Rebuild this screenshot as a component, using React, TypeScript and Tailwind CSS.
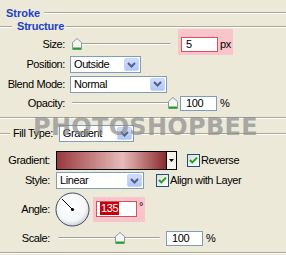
import React from "react";

function Etched({ className = "" }: { className?: string }) {
  return <div className={"h-0 border-t border-t-[#aca899] border-b border-b-white " + className} />;
}

function Chevron() {
  return (
    <svg width="9" height="6" viewBox="0 0 9 6">
      <path d="M1 1 L4.5 4.5 L8 1" fill="none" stroke="#4d6185" strokeWidth="2" />
    </svg>
  );
}

function Select({ className, value }: { className: string; value: string }) {
  return (
    <div className={"flex h-[17px] border border-[#7f9db9] bg-white " + className}>
      <div className="flex flex-1 items-center pl-[3px]">{value}</div>
      <div className="m-[1px] flex w-[15px] items-center justify-center rounded-[2px] border border-[#c6d5fb] bg-linear-to-b from-[#d3ddfc] to-[#b2c5f4]">
        <Chevron />
      </div>
    </div>
  );
}

function Thumb() {
  return (
    <svg width="10" height="12" viewBox="0 0 10 12">
      <path d="M0.5 4.5 L5 0.5 L9.5 4.5 V11.5 H0.5 Z" fill="#f6f6f2" stroke="#8a9aa6" />
      <path d="M1 10.5 H9" stroke="#24a024" strokeWidth="2" />
    </svg>
  );
}

function Slider({ className, thumbLeft }: { className: string; thumbLeft: number }) {
  return (
    <div className={"relative h-[14px] " + className}>
      <div className="absolute left-[2px] right-[1px] top-[6px] h-0 rounded-full border-t border-t-[#a3a296] border-b border-b-white" />
      <div className="absolute top-[1px]" style={{ left: thumbLeft }}>
        <Thumb />
      </div>
    </div>
  );
}

function Check() {
  return (
    <svg width="13" height="13" viewBox="0 0 13 13">
      <defs>
        <linearGradient id="cbg" x1="0" y1="0" x2="1" y2="1">
          <stop offset="0" stopColor="#dcdcd6" />
          <stop offset="1" stopColor="#ffffff" />
        </linearGradient>
      </defs>
      <rect x="0.5" y="0.5" width="12" height="12" fill="url(#cbg)" stroke="#1c5180" />
      <path d="M3 6 L5.3 8.4 L10 3.6" fill="none" stroke="#21a121" strokeWidth="2" />
    </svg>
  );
}

function Dial() {
  return (
    <svg width="35" height="35" viewBox="0 0 35 35">
      <defs>
        <radialGradient id="dg" cx="0.45" cy="0.4" r="0.6">
          <stop offset="0" stopColor="#ffffff" />
          <stop offset="0.75" stopColor="#f4f6f9" />
          <stop offset="1" stopColor="#c9d2de" />
        </radialGradient>
      </defs>
      <circle cx="17.5" cy="17.5" r="16.5" fill="url(#dg)" stroke="#3e4b5b" />
      <line x1="17.5" y1="17.5" x2="7" y2="7" stroke="#000" strokeWidth="1" />
      <circle cx="17.5" cy="17.5" r="1.6" fill="#000" />
    </svg>
  );
}

export default function App() {
  return (
    <div className="relative h-[255px] w-[286px] overflow-hidden bg-[#ece9d8] font-['Liberation_Sans',Arial,sans-serif] text-[11px] leading-none tracking-[-0.4px] text-black">
      {/* Stroke header */}
      <div className="mt-[6px] flex h-[14px] items-center pl-[6px]">
        <span className="font-bold tracking-[0px] text-[#1d42c9]">Stroke</span>
        <Etched className="ml-[4px] flex-1" />
      </div>
      {/* Structure header */}
      <div className="flex h-[13px] items-center">
        <Etched className="w-[12px]" />
        <span className="ml-[5px] font-bold tracking-[-0.2px] text-[#1d42c9]">Structure</span>
        <Etched className="ml-[2px] flex-1" />
      </div>

      {/* Size */}
      <div className="flex h-[22px] items-center">
        <div className="w-[65px] text-right">Size:</div>
        <Slider className="ml-[5px] w-[102px]" thumbLeft={2} />
        <div className="-mt-[4px] ml-[6px] flex items-center self-stretch bg-[#f9c4ca] pl-[3px] pr-[2px] pt-[5px]">
          <div className="flex h-[15px] w-[37px] items-center border border-[#e2505e] bg-white pl-[4px]">5</div>
          <span className="ml-[2px]">px</span>
        </div>
      </div>

      {/* Position */}
      <div className="flex h-[19px] items-center">
        <div className="w-[65px] text-right">Position:</div>
        <Select className="ml-[5px] w-[71px]" value="Outside" />
      </div>

      {/* Blend Mode */}
      <div className="flex h-[20px] items-center">
        <div className="w-[65px] text-right">Blend Mode:</div>
        <Select className="ml-[5px] w-[97px]" value="Normal" />
      </div>

      {/* Opacity */}
      <div className="flex h-[18px] items-center">
        <div className="w-[65px] text-right">Opacity:</div>
        <Slider className="ml-[5px] w-[108px]" thumbLeft={98} />
        <div className="ml-[2px] flex h-[15px] w-[37px] items-center border border-[#7f9db9] bg-white pl-[5px]">100</div>
        <span className="ml-[3px]">%</span>
      </div>

      <Etched className="mt-[5px]" />

      {/* Fill Type */}
      <div className="mt-[6px] flex h-[17px] items-center">
        <Etched className="w-[10px]" />
        <span className="ml-[3px]">Fill Type:</span>
        <Select className="ml-[6px] w-[75px]" value="Gradient" />
        <Etched className="ml-[3px] flex-1" />
      </div>

      {/* Gradient */}
      <div className="mt-[9px] flex h-[19px] items-center">
        <div className="w-[50px] text-right">Gradient:</div>
        <div className="ml-[6px] flex h-[19px] w-[121px] border border-black">
          <div className="flex-1 bg-linear-to-r from-[#983840] via-[#e7bcbc] via-60% to-[#8a2a31]" />
          <div className="flex w-[10px] items-center justify-center border-l border-l-black bg-[#f4f3ee]">
            <svg width="5" height="3" viewBox="0 0 5 3">
              <path d="M0 0 H5 L2.5 3 Z" fill="#000" />
            </svg>
          </div>
        </div>
        <div className="ml-[10px] flex items-center">
          <Check />
          <span className="ml-[1px]">Reverse</span>
        </div>
      </div>

      {/* Style */}
      <div className="mt-[2px] flex h-[17px] items-center">
        <div className="w-[50px] text-right">Style:</div>
        <Select className="ml-[6px] w-[88px]" value="Linear" />
        <div className="ml-[12px] flex items-center">
          <Check />
          <span className="ml-[1px]">Align with Layer</span>
        </div>
      </div>

      {/* Angle */}
      <div className="mt-[3px] flex h-[34px] items-center">
        <div className="w-[50px] text-right">Angle:</div>
        <div className="ml-[5px]">
          <Dial />
        </div>
        <div className="ml-[3px] flex h-[25px] items-start bg-[#f9c4ca] pl-[3px] pr-[2px] pt-[4px]">
          <div className="flex h-[16px] w-[41px] items-center border border-[#d4505c] bg-white pl-[3px]">
            <span className="bg-[#c4000c] px-[1px] py-[1px] text-white">135</span>
          </div>
          <span className="ml-[2px] mt-[0px]">°</span>
        </div>
      </div>

      {/* Scale */}
      <div className="mt-[4px] flex h-[16px] items-center">
        <div className="w-[50px] text-right">Scale:</div>
        <Slider className="ml-[6px] w-[105px]" thumbLeft={59} />
        <div className="ml-[5px] flex h-[15px] w-[37px] items-center border border-[#7f9db9] bg-white pl-[5px]">100</div>
        <span className="ml-[3px]">%</span>
      </div>

      <Etched className="mt-[6px]" />

      {/* Watermark */}
      <div className="pointer-events-none absolute left-[33px] top-[115px] font-['DejaVu_Sans',sans-serif] text-[24px] font-bold leading-[24px] tracking-[0.3px] text-[#8a8a8a]/70">
        PHOTOSHOPBEE
      </div>
    </div>
  );
}
